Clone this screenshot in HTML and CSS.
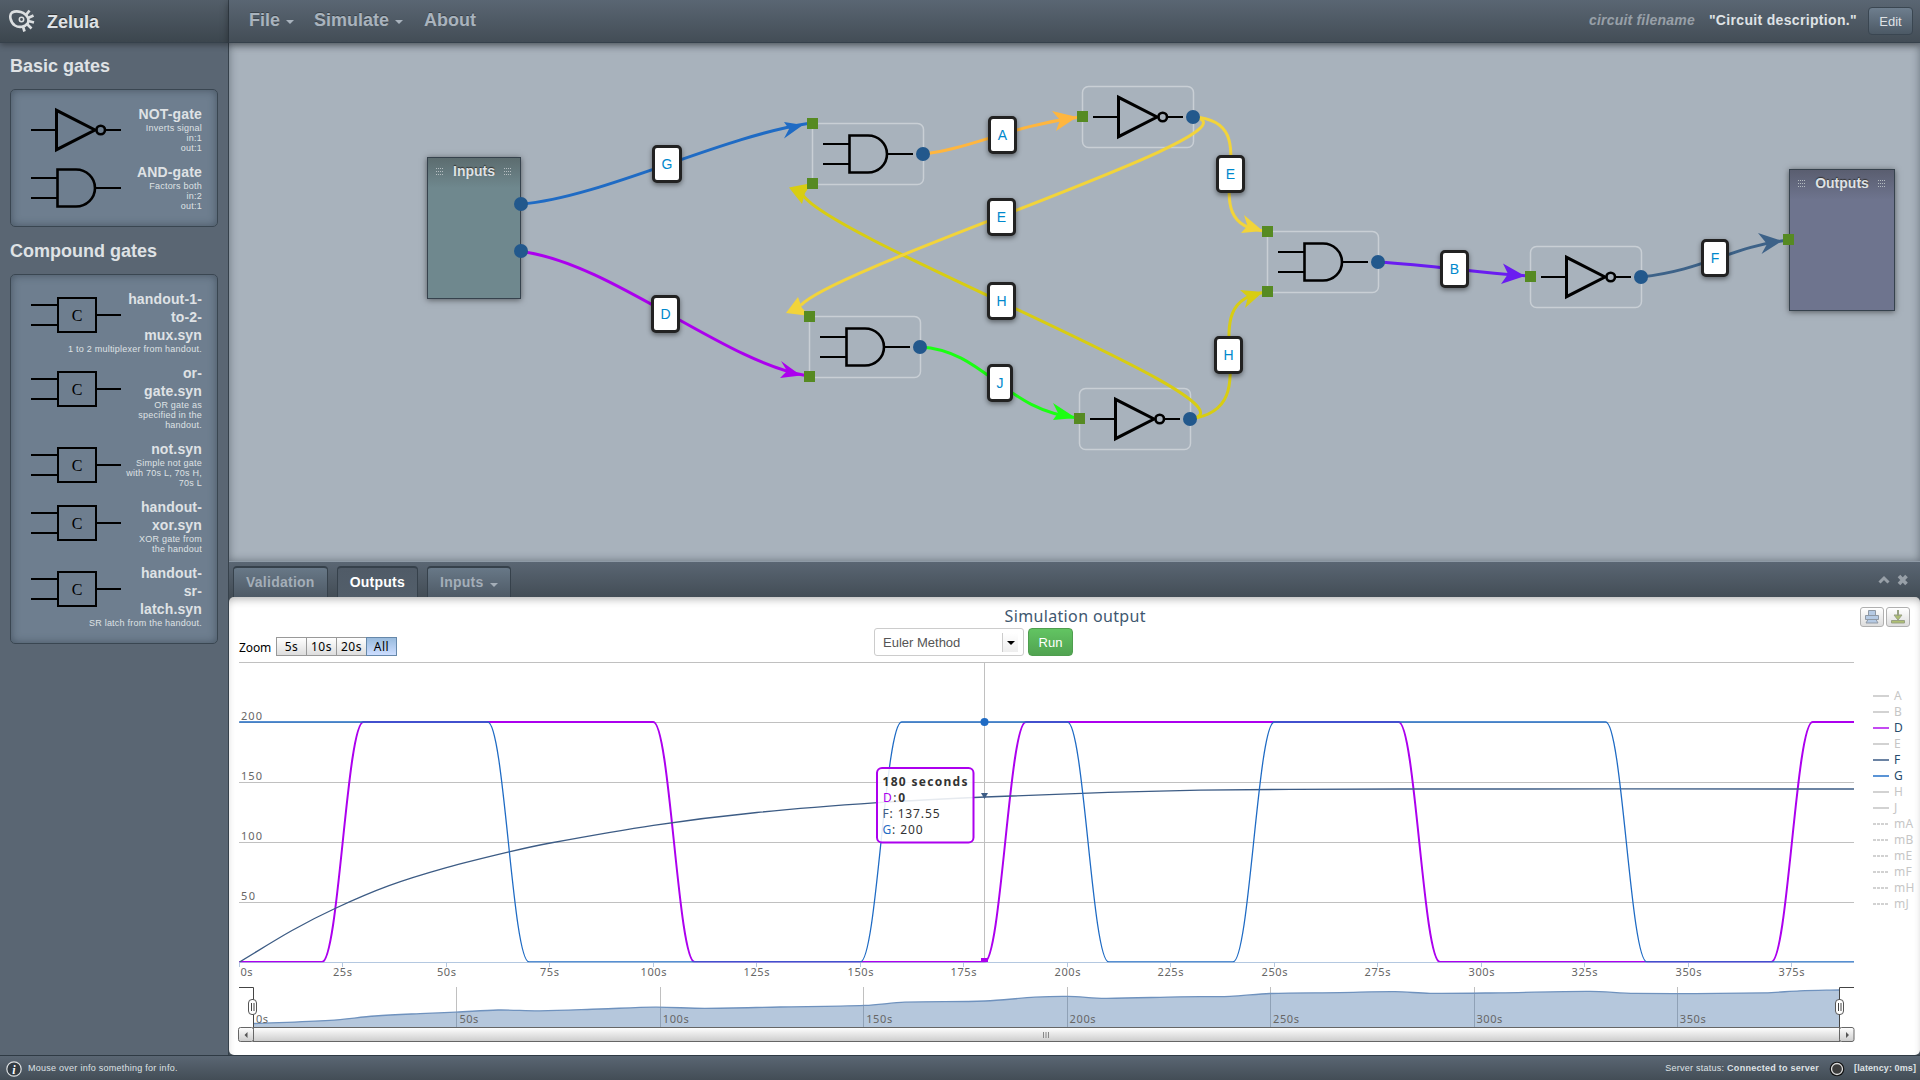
FILE: index.html
```html
<!DOCTYPE html>
<html lang="en">
<head>
<meta charset="utf-8">
<title>Zelula</title>
<link rel="stylesheet" href="styles.css">
</head>
<body>
<svg width="0" height="0" class="defs">
  <defs>
    <symbol id="gate-not" viewBox="0 0 90 48">
      <path d="M0 24H25M75 24H90" stroke="#000" stroke-width="2"/>
      <path d="M25.500 4.300V43.700L64 24Z" fill="none" stroke="#000" stroke-width="3"/>
      <circle cx="69.700" cy="24" r="4.300" fill="none" stroke="#000" stroke-width="2.600"/>
    </symbol>
    <symbol id="gate-and" viewBox="0 0 90 48">
      <path d="M0 14H26M0 34H26M65 24H90" stroke="#000" stroke-width="2"/>
      <path d="M26.500 5.500H45A19 18.500 0 0 1 45 42.500H26.500Z" fill="none" stroke="#000" stroke-width="2.600"/>
    </symbol>
    <symbol id="gate-c" viewBox="0 0 90 48">
      <path d="M0 14H26M0 34H26M65 24H90" stroke="#000" stroke-width="2"/>
      <rect x="27" y="7" width="38" height="34" fill="none" stroke="#000" stroke-width="2"/>
      <text x="46" y="29.500" text-anchor="middle" class="gate-letter">C</text>
    </symbol>
    <linearGradient id="barfill" x1="0" y1="0" x2="0" y2="1"><stop offset="0" stop-color="#fff"/><stop offset="1" stop-color="#ccc"/></linearGradient>
    <clipPath id="plotarea"><rect x="239" y="657" width="1615" height="305.300"/></clipPath>
  </defs>
</svg>
<div class="app">
  <header class="brand">
    <svg class="logo" width="26" height="24" viewBox="0 0 26 24" fill="none" stroke="#dcdfe1">
      <path d="M19 9C16 3 8 1 3 3.500C0 6 1 13 6 16.500C10 19 16 18 18.500 14.500C19.500 13 19.600 11 19 9Z" stroke-width="2.600"/>
      <circle cx="12.500" cy="10.500" r="2.200" stroke-width="1.500"/>
      <path d="M17 6L20.500 1.500M19 9L24.500 6.500M19.500 12L25 13.500M18 15L22.500 19.500M14 17.500L15.500 22.500" stroke-width="2.700"/>
    </svg>
    <span>Zelula</span>
  </header>
  <header class="topbar">
    <nav class="menu"><a>File<i class="caret"></i></a><a>Simulate<i class="caret"></i></a><a>About</a></nav>
    <div class="circuit"><em>circuit filename</em><b>"Circuit description."</b><button class="btn edit">Edit</button></div>
  </header>

  <aside class="sidebar">
    <h2>Basic gates</h2>
    <div class="well first">
      <div class="gate"><svg width="90" height="48"><use href="#gate-not"/></svg><h3>NOT-gate</h3><p>Inverts signal<br>in:1<br>out:1</p></div>
      <div class="gate"><svg width="90" height="48"><use href="#gate-and"/></svg><h3>AND-gate</h3><p>Factors both<br>in:2<br>out:1</p></div>
    </div>
    <h2 class="second">Compound gates</h2>
    <div class="well">
      <div class="gate"><svg width="90" height="48"><use href="#gate-c"/></svg><h3>handout-1-<br>to-2-<br>mux.syn</h3><p>1 to 2 multiplexer from handout.</p></div>
      <div class="gate"><svg width="90" height="48"><use href="#gate-c"/></svg><h3>or-<br>gate.syn</h3><p>OR gate as<br>specified in the<br>handout.</p></div>
      <div class="gate"><svg width="90" height="48"><use href="#gate-c"/></svg><h3>not.syn</h3><p>Simple not gate<br>with 70s L, 70s H,<br>70s L</p></div>
      <div class="gate"><svg width="90" height="48"><use href="#gate-c"/></svg><h3>handout-<br>xor.syn</h3><p>XOR gate from<br>the handout</p></div>
      <div class="gate"><svg width="90" height="48"><use href="#gate-c"/></svg><h3>handout-<br>sr-<br>latch.syn</h3><p>SR latch from the handout.</p></div>
    </div>
  </aside>

  <main class="workspace">
    <div class="io io-in"><i class="grip"></i>Inputs<i class="grip"></i></div>
    <div class="io io-out"><i class="grip"></i>Outputs<i class="grip"></i></div>
    <svg class="wires" width="1691" height="518" viewBox="229 43 1691 518">
      <g fill="none" stroke="#fff" stroke-opacity=".38" stroke-width="1.500">
        <rect x="812.500" y="123.500" width="111" height="61" rx="6"/>
        <rect x="809.500" y="316.500" width="111" height="61" rx="6"/>
        <rect x="1082.500" y="86.500" width="111" height="61" rx="6"/>
        <rect x="1079.500" y="388.500" width="111" height="61" rx="6"/>
        <rect x="1267.500" y="231.500" width="111" height="61" rx="6"/>
        <rect x="1530.500" y="246.500" width="111" height="61" rx="6"/>
      </g>
      <use href="#gate-and" x="823" y="130" width="90" height="48"/>
      <use href="#gate-and" x="820" y="323" width="90" height="48"/>
      <use href="#gate-not" x="1093" y="93" width="90" height="48"/>
      <use href="#gate-not" x="1090" y="395" width="90" height="48"/>
      <use href="#gate-and" x="1278" y="238" width="90" height="48"/>
      <use href="#gate-not" x="1541" y="253" width="90" height="48"/>
      <g fill="none" stroke-width="3">
        <path d="M521 204C600 198 720 137 808 123.500" stroke="#1f6bc4"/>
        <path d="M521 251.500C610 262 725 363 808 376" stroke="#ac00ee"/>
        <path d="M923 154C970 149 1010 126 1080 117" stroke="#ffb63e"/>
        <path d="M1190 419C1284 406 716 197 812 184" stroke="#d8cd12" pathLength="100" stroke-dasharray="96 4"/>
        <path d="M1193 117C1287 130 713 303 809 316" stroke="#f2d43a" pathLength="100" stroke-dasharray="96 4"/>
        <path d="M1193 117C1275 121 1185 227 1267 231" stroke="#f2d43a"/>
        <path d="M1190 419C1275 408 1185 300 1267 292" stroke="#d8cd12"/>
        <path d="M920 347C985 350 1005 412 1079 418" stroke="#1bff12"/>
        <path d="M1378 262C1440 266 1470 272 1530 276" stroke="#6a1cf0"/>
        <path d="M1641 277C1705 270 1730 247 1788 240" stroke="#3d6288"/>
      </g>
      <path d="M803 125L784 122L789 129L784 138.500Z" fill="#1f6bc4"/>
      <path d="M801 375.500L781 361L787 371L780 378Z" fill="#ac00ee"/>
      <path d="M1077 117L1052 111L1060 120L1056 131Z" fill="#ffb63e"/>
      <path d="M789 187.500L812 183L805 193L802 204Z" fill="#d8cd12"/>
      <path d="M786 313L798 297L802 308L810 316Z" fill="#f2d43a"/>
      <path d="M1263 231L1244 215L1247.500 226L1241 233Z" fill="#f2d43a"/>
      <path d="M1263 292L1240 290L1248 297L1245 308Z" fill="#d8cd12"/>
      <path d="M1076 418L1053 403L1058 413L1053 420Z" fill="#1bff12"/>
      <path d="M1525 276L1503 263.500L1508 274L1501 284Z" fill="#6a1cf0"/>
      <path d="M1782 241L1758 233L1767 244L1761.500 254Z" fill="#3d6288"/>
      <g fill="#568a22">
        <rect x="807" y="118" width="11" height="11"/><rect x="807" y="178" width="11" height="11"/>
        <rect x="804" y="311" width="11" height="11"/><rect x="804" y="371" width="11" height="11"/>
        <rect x="1077" y="111" width="11" height="11"/><rect x="1074" y="413" width="11" height="11"/>
        <rect x="1262" y="226" width="11" height="11"/><rect x="1262" y="286" width="11" height="11"/>
        <rect x="1525" y="271" width="11" height="11"/><rect x="1783" y="234" width="11" height="11"/>
      </g>
      <g fill="#22588c">
        <circle cx="521" cy="204" r="7"/><circle cx="521" cy="251" r="7"/><circle cx="923" cy="154" r="7"/><circle cx="920" cy="347" r="7"/>
        <circle cx="1193" cy="117" r="7"/><circle cx="1190" cy="419" r="7"/><circle cx="1378" cy="262" r="7"/><circle cx="1641" cy="277" r="7"/>
      </g>
    </svg>
    <span class="tag t-g">G</span><span class="tag t-d">D</span><span class="tag t-a">A</span><span class="tag t-e1">E</span><span class="tag t-h1">H</span>
    <span class="tag t-j">J</span><span class="tag t-e2">E</span><span class="tag t-h2">H</span><span class="tag t-b">B</span><span class="tag t-f">F</span>
  </main>

  <div class="tabbar">
    <div class="tabs"><a class="tab">Validation</a><a class="tab active">Outputs</a><a class="tab">Inputs<i class="caret"></i></a></div>
    <svg class="tabtools" width="30" height="12" viewBox="0 0 30 12" fill="none" stroke="#98a0a8"><path d="M1.500 8.500L6 4L10.500 8.500" stroke-width="3"/><path d="M21 2L28.500 10M28.500 2L21 10" stroke-width="3.600"/></svg>
  </div>

  <section class="panel">
    <div class="sheet">
      <div class="toolbar">
        <div class="zoom"><span>Zoom</span><button>5s</button><button>10s</button><button>20s</button><button class="on">All</button></div>
        <div class="run">
          <svg class="title" width="401" height="28"><text x="201" y="21.500" text-anchor="middle" textLength="141">Simulation output</text></svg>
          <div class="form"><div class="select"><span>Euler Method</span><i class="arrow"></i></div><button class="btn go">Run</button></div>
        </div>
        <div class="export">
          <button><svg width="14" height="14" viewBox="0 0 14 14" fill="#b5cae4" stroke="#8f99a5"><path d="M3.500 .5H10.500V5.500H3.500ZM.5 5.500H13.500V9.500H.5ZM3 9.500H11L13 13H1Z"/></svg></button>
          <button><svg width="14" height="14" viewBox="0 0 14 14" fill="#aebf72" stroke="#98a183"><path d="M.5 10.500H13.500V13H.5ZM3 5H11L7 10Z"/><path d="M7 0V6" stroke-width="2"/></svg></button>
        </div>
      </div>
      <div class="plot">
        <svg id="chart" width="1630" height="397" viewBox="229 657 1630 397"></svg>
        <ul id="legend" class="legend"></ul>
      </div>
    </div>
  </section>

  <footer class="status">
    <svg width="16" height="16" viewBox="0 0 16 16"><circle cx="8" cy="8" r="7.200" fill="#333b42" stroke="#dde0e2" stroke-width="1.200"/><text x="8" y="12.500" text-anchor="middle" class="info">i</text></svg>
    <span class="hint">Mouse over info something for info.</span>
    <span class="server">Server status: <b>Connected to server</b></span>
    <svg class="led" width="16" height="16" viewBox="0 0 16 16"><circle cx="8" cy="8" r="7.300" fill="#111"/><circle cx="8" cy="8" r="5.500" fill="#3c3c3c" stroke="#ddd" stroke-width="1.300"/></svg>
    <b class="latency">[latency: 0ms]</b>
  </footer>
</div>
<script src="chart.js"></script>
</body>
</html>
```
FILE: chart.js
```js
const X = t => 239.2 + t * 4.1406;
const Y = v => 962 - v * 1.2;
const out = [];

// Square wave with soft 10 s edges: list of [start of edge, value after edge].
function wave(start, edges) {
  let d = `M${X(0)} ${Y(start)}`, v = start;
  for (const [t, next] of edges) {
    d += `L${X(t)} ${Y(v)}C${X(t + 4)} ${Y(v)} ${X(t + 6)} ${Y(next)} ${X(t + 10)} ${Y(next)}`;
    v = next;
  }
  return d + `L1854 ${Y(v)}`;
}

// Smooth curve through pixel points.
function spline(p) {
  let d = `M${p[0][0]} ${p[0][1]}`;
  const m = p.map((q, i) => {
    const a = p[Math.max(i - 1, 0)], b = p[Math.min(i + 1, p.length - 1)];
    return (b[1] - a[1]) / (b[0] - a[0]);
  });
  for (let i = 1; i < p.length; i++) {
    const h = (p[i][0] - p[i - 1][0]) / 3;
    d += `C${p[i - 1][0] + h} ${p[i - 1][1] + m[i - 1] * h} ${p[i][0] - h} ${p[i][1] - m[i] * h} ${p[i][0]} ${p[i][1]}`;
  }
  return d;
}
const line = (d, stroke, w, extra = '') => out.push(`<path d="${d}" fill="none" stroke="${stroke}" stroke-width="${w}" ${extra}/>`);
const text = (x, y, s, len, cls = 'axis') => out.push(`<text x="${x}" y="${y}" class="${cls}" textLength="${len}">${s}</text>`);

for (let v = 50; v <= 250; v += 50) line(`M239 ${Y(v) + .5}H1854`, '#c0c0c0', 1);
line('M239 962.5H1854', '#b4c8e0', 1);
for (let v = 50; v <= 200; v += 50) text(241, Y(v) - 2.5, v, v < 100 ? 14 : 21);
for (let t = 0; t <= 375; t += 25) {
  const x = Math.floor(X(t)) + .5, len = t === 0 ? 12 : t < 100 ? 19 : 26;
  line(`M${x} 963V967`, '#b4c8e0', 1);
  text(t === 0 ? 240.5 : x - len / 2, 976, t + 's', len);
}
line('M984.5 662V962', '#c0c0c0', 1);

out.push('<g clip-path="url(#plotarea)">');
line(wave(0, [[20, 200], [100, 0], [180, 200], [280, 0], [370, 200]]), '#ac00ee', 2);
line(spline([[239.5, 962], [292, 930.5], [335, 908.5], [389, 885.7], [446.4, 867.7], [509, 851.9], [550.4, 843], [653.4, 825.3], [756.9, 812.5], [877.7, 802.7], [985, 797], [1108, 792.4], [1200, 790.2], [1290, 789.3], [1400, 789], [1854, 789]]), '#3d5c85', 1.3);
line(wave(200, [[60, 0], [150, 200], [200, 0], [240, 200], [330, 0]]), '#1f6bc4', 1.3);
out.push('</g>');

out.push('<circle cx="984.500" cy="722" r="4" fill="#1f6bc4"/><path d="M981 793H988L984.500 799Z" fill="#3d5c85"/><path d="M981 958H988V962H981Z" fill="#ac00ee"/>');

out.push('<rect x="877" y="768" width="96.500" height="74.500" rx="5" class="tipbox"/>');
text(882.5, 786, '180 seconds', 85, 'tip bold');
text(883, 801.5, '<tspan fill="#ac00ee">D</tspan>:<tspan font-weight="bold">0</tspan>', 22, 'tip');
text(882.5, 817.5, '<tspan fill="#3d5c85">F</tspan>: 137.55', 57, 'tip');
text(882.5, 833.5, '<tspan fill="#1f6bc4">G</tspan>: 200', 40, 'tip');

// Navigator
for (let i = 1; i <= 7; i++) line(`M${Math.round(252.6 + i * 203.5) + .5} 987V1027`, '#c0c0c0', 1);
const nav = spline([[253.5, 1023.5], [330, 1020.3], [375, 1016], [420, 1013.6], [456, 1012.2], [498, 1010], [540, 1010.8], [600, 1009], [655, 1007.2], [705, 1008.3], [780, 1007], [865, 1005.4], [905, 1002.2], [985, 1001], [1035, 997.2], [1068, 996.4], [1105, 998.3], [1180, 996.8], [1230, 996.3], [1270, 993.5], [1340, 992.6], [1395, 991.7], [1430, 993.3], [1500, 992.8], [1590, 991.4], [1635, 993.4], [1765, 992.8], [1800, 990.8], [1839.5, 990]]);
out.push(`<path d="${nav}V1027H253.500Z" fill="#4572a7" fill-opacity=".4"/>`);
line(nav, '#6f92be', 1.3);
for (let i = 0; i <= 7; i++) text(i ? 256 + i * 203.4 : 256, 1023, i * 50 + 's', i === 0 ? 12 : i === 1 ? 19 : 26);
line('M239 987.5H253.500V1027M1854 987.5H1839.500V1027', '#444', 1);
for (const x of [252.5, 1839.5])
  out.push(`<rect x="${x - 4}" y="999.500" width="8" height="15" rx="3.500" fill="#fff" stroke="#555"/><path d="M${x - 1} 1003V1011M${x + 1.5} 1003V1011" stroke="#444"/>`);
out.push('<g stroke="#666"><rect x="253.500" y="1027.500" width="1586" height="14" fill="url(#barfill)"/><rect x="238.500" y="1027.500" width="15" height="14" rx="2" fill="url(#barfill)"/><rect x="1839.500" y="1027.500" width="14.500" height="14" rx="2" fill="url(#barfill)"/></g>');
out.push('<path d="M247.500 1032V1038L244.500 1035ZM1846 1032V1038L1849 1035Z" fill="#555"/><path d="M1043.500 1032V1038M1046 1032V1038M1048.500 1032V1038" stroke="#888"/>');
document.getElementById('chart').innerHTML = out.join('');

const live = { D: '#c44af2', F: '#6b83a3', G: '#5a94d6' };
document.getElementById('legend').innerHTML = 'A B D E F G H J mA mB mE mF mH mJ'.split(' ').map(n =>
  `<li class="${live[n] ? 'on' : ''}"><svg width="16" height="2"><path d="M0 1H16" stroke="${live[n] || '#d2d2d2'}" stroke-width="2" ${n[0] === 'm' ? 'stroke-dasharray="3 1"' : ''}/></svg>${n}</li>`).join('');
```
FILE: styles.css
```css
* { box-sizing: border-box; }
body { margin: 0; font-family: "Liberation Sans", Arial, sans-serif; color: #dfe2e5; background: #5a6673; }
h2, h3, p, ul { margin: 0; padding: 0; }
button { font-family: inherit; margin: 0; padding: 0; }
.defs { position: absolute; }
.app { width: 1920px; height: 1080px; overflow: hidden; display: grid; grid-template-columns: 229px 1691px; grid-template-rows: 43px 518px 36px 458px 25px; }
.brand, .topbar { display: flex; align-items: center; border-bottom: 1px solid #36414b; position: relative; z-index: 2; }
.brand { background: linear-gradient(#535e69, #3c464e); border-right: 1px solid #36414b; padding: 0 0 0 9px; gap: 12px; font-size: 18px; font-weight: bold; box-shadow: 0 2px 6px rgba(0,0,0,.35); }
.brand span { padding-top: 2px; text-shadow: 0 -1px 0 #333; }
.topbar { background: linear-gradient(#5a6673, #434d56); justify-content: space-between; padding: 0 7px 0 20px; box-shadow: 0 2px 8px rgba(0,0,0,.4); }
.menu { display: flex; gap: 20px; font-size: 18px; line-height: 21px; font-weight: bold; color: #a9b3bd; padding-bottom: 2px; text-shadow: 0 -1px 0 #39424a; }
.menu a { display: flex; align-items: center; }
.menu a:last-child { padding-left: 1px; }
.caret { border: 4px solid transparent; border-top-color: currentColor; border-bottom: 0; margin-left: 6px; margin-top: 4px; }
.circuit { display: flex; align-items: center; font-size: 14px; font-weight: bold; }
.circuit em { color: #98a0a8; margin-right: 14px; letter-spacing: .2px; }
.circuit b { margin-right: 11px; letter-spacing: .33px; }
.circuit em, .circuit b { padding-bottom: 2px; }
.btn { font-size: 13px; border-radius: 4px; height: 28px; }
.edit { width: 45px; color: #dfe2e5; background: linear-gradient(#6e7e8e, #4c5965); border: 1px solid #3a4651; }

.sidebar { grid-row: 2 / 5; background: #5a6673; border-right: 1px solid #36414b; padding: 13px 10px 0; }
.sidebar h2 { font-size: 18px; line-height: 20px; margin-bottom: 13px; }
.sidebar h2.second { margin-top: 14px; }
.well { width: 208px; background: #6e7e8f; border: 1px solid #3a4651; border-radius: 5px; padding: 16px 15px 4px 20px; box-shadow: inset 0 0 9px rgba(40,52,64,.55); }
.gate { text-align: right; margin-bottom: 10px; white-space: nowrap; }
.gate svg { float: left; }
.gate h3 { font-size: 14px; line-height: 18px; letter-spacing: .15px; position: relative; top: -1px; }
.gate p { font-size: 9px; line-height: 10px; letter-spacing: .23px; position: relative; top: -1px; }
.gate-letter { font: 16px "Liberation Serif", serif; letter-spacing: 0; }

.workspace { position: relative; background: #a8b2bc; box-shadow: inset 0 0 9px rgba(40,50,60,.5); }
.wires { position: absolute; left: 0; top: 0; }
.io { position: absolute; display: flex; justify-content: space-between; align-items: flex-start; padding: 5px 8px; height: 142px; font-size: 14px; line-height: 16px; font-weight: bold; border: 1px solid #36424d; text-shadow: 0 -1px 1px #333; box-shadow: 0 1px 6px rgba(0,0,0,.5); }
.io-in { left: 198px; top: 114px; width: 94px; background: linear-gradient(#5c6c6f, #6f888e 30px); }
.io-out { left: 1560px; top: 126px; width: 106px; background: linear-gradient(#5a5e70, #6e748e 30px); }
.grip { width: 8px; height: 9px; margin-top: 5px; background: repeating-linear-gradient(90deg, #b4bcc0 0 1px, transparent 1px 2px) 0 0 / 8px 9px; -webkit-mask: repeating-linear-gradient(#000 0 1px, transparent 1px 3px); mask: repeating-linear-gradient(#000 0 1px, transparent 1px 3px); }
.tag { position: absolute; width: 29px; height: 38px; border: 3px solid #222; border-radius: 5px; background: #fff; color: #08c; font-size: 14px; line-height: 32px; text-align: center; box-shadow: 0 2px 5px rgba(0,0,0,.45); }
.t-g { left: 423px; top: 102px; width: 30px; } .t-d { left: 422px; top: 252px; }
.t-a { left: 759px; top: 73px; } .t-e1 { left: 758px; top: 155px; } .t-h1 { left: 758px; top: 239px; }
.t-j { left: 758px; top: 321px; width: 26px; } .t-e2 { left: 987px; top: 112px; } .t-h2 { left: 985px; top: 293px; }
.t-b { left: 1211px; top: 207px; } .t-f { left: 1472px; top: 196px; width: 28px; }

.tabbar { background: linear-gradient(#5a6673, #434d56); border-top: 1px solid #8e9aa6; display: flex; justify-content: space-between; align-items: flex-end; padding: 0 12px 0 4px; }
.tabs { display: flex; gap: 9px; }
.tab { height: 31px; border: 1px solid #36414b; border-width: 2px 1px 0; border-radius: 4px 4px 0 0; background: linear-gradient(#687887, #4e5a66); color: #a4aeb8; font-size: 14px; font-weight: bold; letter-spacing: .25px; line-height: 29px; padding: 0 12px; display: flex; align-items: center; }
.tab.active { color: #fff; background: linear-gradient(#505b67, #525e6a); }
.tabtools { margin-bottom: 11px; }

.panel { background: #434d56; position: relative; }
.sheet { height: 458px; background: #fff; border-radius: 5px; box-shadow: inset 0 5px 8px -3px rgba(0,0,0,.3); color: #000; }
.toolbar { height: 60px; display: flex; align-items: flex-start; padding: 3px 10px 0 10px; }
.zoom { display: flex; width: 635px; padding-top: 37px; font: 12px "Noto Sans", sans-serif; }
.zoom span { width: 37px; line-height: 20px; padding-top: 1px; letter-spacing: -.1px; }
.zoom button { width: 31px; height: 19px; margin-right: -1px; border: 1px solid #999; background: linear-gradient(#fff, #ddd); font: 12px/17px "Noto Sans", sans-serif; letter-spacing: .5px; color: #000; }
.zoom button.on { border-color: #68a; background: linear-gradient(#9bd, #cdf); position: relative; }
.run { width: 401px; }
.title { display: block; font: 16px "Noto Sans", sans-serif; fill: #3e576f; }
.form { display: flex; gap: 4px; }
.select { width: 150px; height: 28px; border: 1px solid #ccc; border-radius: 3px; color: #555; font-size: 13px; line-height: 26px; padding: 1px 5px 0 8px; display: flex; align-items: center; justify-content: space-between; }
.select .arrow { width: 16px; height: 19px; border-left: 1px solid #ccc; background: linear-gradient(#fff, #eee); display: flex; align-items: center; justify-content: flex-end; }
.select .arrow::after { content: ""; border: 4px solid transparent; border-top: 4px solid #000; border-bottom: 0; margin-right: 3px; }
.go { width: 45px; color: #fff; background: linear-gradient(#62c462, #51a351); border: 1px solid #4f9e4f; }
.export { display: flex; gap: 2px; margin-left: auto; padding-top: 7px; }
.export button { width: 24px; height: 20px; border: 1px solid #b0b0b0; border-radius: 3px; background: linear-gradient(#fff, #ddd); display: flex; align-items: center; justify-content: center; }
.plot { display: flex; }
.axis { font: 11px "Noto Sans", sans-serif; fill: #666; }
.tip { font: 12px "Noto Sans", sans-serif; fill: #333; }
.tip.bold { font-weight: bold; }
.tipbox { fill: #fff; fill-opacity: .87; stroke: #ac00ee; stroke-width: 2; }
.legend { list-style: none; padding: 31px 0 0 14px; font: 12px/16px "Noto Sans", sans-serif; color: #c6c6c6; letter-spacing: .3px; }
.legend li { display: flex; align-items: center; gap: 5px; height: 16px; }
.legend .on { color: #274b6d; }

.status { grid-column: 1 / 3; background: linear-gradient(#5a6673, #434d56); border-top: 1px solid #2f3a44; display: flex; align-items: center; padding: 2px 4px 0 6px; font-size: 9px; letter-spacing: .26px; position: relative; }
.info { font: italic bold 12px "Liberation Serif", serif; fill: #fff; }
.hint { margin-left: 6px; padding-bottom: 2px; }
.server { margin-left: auto; padding-bottom: 2px; }
.led { margin: 0 9px 0 10px; }
.latency { padding-bottom: 2px; letter-spacing: .1px; }
```
